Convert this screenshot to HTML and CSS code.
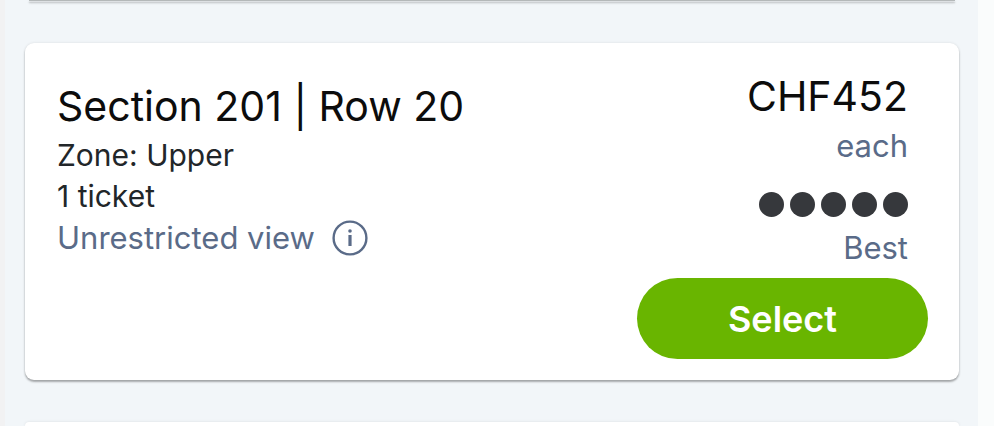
FILE: index.html
```html
<!DOCTYPE html>
<html lang="en">
<head>
    <meta charset="UTF-8">
    <meta name="viewport" content="width=device-width, initial-scale=1.0">
    <title>Tickets</title>
    <link rel="stylesheet" href="styles.css">
</head>
<body>

    <main class="listings">
        <div class="card card-previous"></div>

        <article class="card listing">
            <div class="listing-info">
                <h2 class="listing-title">Section 201 | Row 20</h2>
                <p class="listing-line">Zone: Upper</p>
                <p class="listing-line">1 ticket</p>
                <p class="listing-line listing-view">
                    Unrestricted view
                    <button class="info-button" type="button" aria-label="View details">
                        <svg class="info-icon" viewBox="0 0 36 36" aria-hidden="true">
                            <circle cx="18" cy="18" r="16.4" fill="none" stroke="currentColor" stroke-width="2.4"/>
                            <circle cx="18" cy="11" r="1.8" fill="currentColor"/>
                            <path d="M18 15v11" fill="none" stroke="currentColor" stroke-width="3.2"/>
                        </svg>
                    </button>
                </p>
            </div>

            <div class="listing-offer">
                <p class="price">CHF452</p>
                <p class="price-note">each</p>
                <div class="rating">
                    <span class="dot"></span>
                    <span class="dot"></span>
                    <span class="dot"></span>
                    <span class="dot"></span>
                    <span class="dot"></span>
                </div>
                <p class="rating-label">Best</p>
                <button class="select-button" type="button">Select</button>
            </div>
        </article>

        <div class="card card-next"></div>
    </main>

</body>
</html>
```

FILE: styles.css
```css
* {
    box-sizing: border-box;
}

body {
    margin: 0;
    background-color: #f2f6f9;
    font-family: Inter, "Liberation Sans", sans-serif;
    font-size: 30px;
    line-height: 41px;
    color: #222629;
}

h2,
p {
    margin: 0;
}

.listings {
    display: flex;
    flex-direction: column;
    gap: 42px;
    min-height: 100vh;
    padding: 0 19px 0 20px;
    border-left: 5px solid #f2f2f3;
    border-right: 16px solid #fafcfc;
}

.card {
    background-color: #fff;
    border-radius: 9px;
    box-shadow: 0 2px 2px rgba(0, 0, 0, 0.3), 0 0 3px rgba(0, 0, 0, 0.1);
}

/* only the bottom edge of the card above is visible */
.card-previous {
    height: 1px;
    margin: 0 4px;
    border-radius: 0;
    background-color: #b4b8b9;
}

/* the card below runs off the bottom */
.card-next {
    flex: 1;
    border-radius: 9px 9px 0 0;
    box-shadow: 0 0 3px rgba(0, 0, 0, 0.1);
}

.listing {
    display: flex;
    justify-content: space-between;
    padding: 25px 31px 21px 32px;
}

.listing-info {
    padding-top: 10px;
}

.listing-title,
.price {
    font-size: 41px;
    font-weight: 400;
    line-height: 57px;
    color: #0c0c0c;
}

.listing-view {
    display: flex;
    align-items: center;
    gap: 17px;
}

.listing-view,
.price-note,
.rating-label {
    font-size: 31px;
    color: #5a6b88;
}

.info-button {
    display: flex;
    padding: 0;
    border: none;
    background: none;
    color: inherit;
    cursor: pointer;
}

.info-icon {
    width: 36px;
    height: 36px;
}

.listing-offer {
    display: flex;
    flex-direction: column;
    align-items: flex-end;
}

.price,
.price-note,
.rating,
.rating-label {
    margin-right: 20px;
}

.rating {
    display: flex;
    gap: 6px;
    padding: 26px 0 10px;
}

.dot {
    width: 25px;
    height: 25px;
    border-radius: 50%;
    background-color: #36383c;
}

.select-button {
    width: 291px;
    height: 81px;
    margin-top: 10px;
    border: none;
    border-radius: 41px;
    background-color: #69b500;
    font-family: inherit;
    font-size: 36px;
    font-weight: 600;
    color: #fff;
    cursor: pointer;
}
```
